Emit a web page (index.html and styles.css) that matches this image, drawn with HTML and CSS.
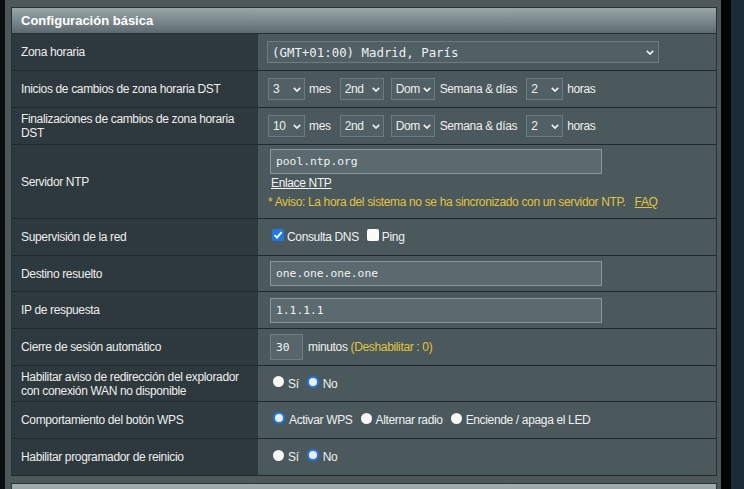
FILE: index.html
```html
<!DOCTYPE html>
<html lang="es">
<head>
<meta charset="utf-8">
<title>Configuración básica</title>
<link rel="stylesheet" href="styles.css">
</head>
<body>
<div class="page">
  <div class="edge-left"></div>
  <main class="panel">
    <section class="form-table">
      <div class="table-head">Configuración básica</div>

      <div class="row">
        <div class="label">Zona horaria</div>
        <div class="value">
          <span class="sel sel-wide">
            <select class="mono"><option>(GMT+01:00) Madrid, París</option></select>
            <svg class="chev" viewBox="0 0 10 6"><path d="M1 1 L5 5 L9 1"/></svg>
          </span>
        </div>
      </div>

      <div class="row">
        <div class="label">Inicios de cambios de zona horaria DST</div>
        <div class="value">
          <span class="sel sel-s"><select><option>3</option></select><svg class="chev" viewBox="0 0 10 6"><path d="M1 1 L5 5 L9 1"/></svg></span>
          <span class="unit">mes</span>
          <span class="sel sel-m sel-gap"><select><option>2nd</option></select><svg class="chev" viewBox="0 0 10 6"><path d="M1 1 L5 5 L9 1"/></svg></span>
          <span class="sel sel-m"><select><option>Dom</option></select><svg class="chev" viewBox="0 0 10 6"><path d="M1 1 L5 5 L9 1"/></svg></span>
          <span class="unit unit-wide">Semana &amp; días</span>
          <span class="sel sel-s"><select><option>2</option></select><svg class="chev" viewBox="0 0 10 6"><path d="M1 1 L5 5 L9 1"/></svg></span>
          <span>horas</span>
        </div>
      </div>

      <div class="row">
        <div class="label">Finalizaciones de cambios de zona horaria DST</div>
        <div class="value">
          <span class="sel sel-s"><select><option>10</option></select><svg class="chev" viewBox="0 0 10 6"><path d="M1 1 L5 5 L9 1"/></svg></span>
          <span class="unit">mes</span>
          <span class="sel sel-m sel-gap"><select><option>2nd</option></select><svg class="chev" viewBox="0 0 10 6"><path d="M1 1 L5 5 L9 1"/></svg></span>
          <span class="sel sel-m"><select><option>Dom</option></select><svg class="chev" viewBox="0 0 10 6"><path d="M1 1 L5 5 L9 1"/></svg></span>
          <span class="unit unit-wide">Semana &amp; días</span>
          <span class="sel sel-s"><select><option>2</option></select><svg class="chev" viewBox="0 0 10 6"><path d="M1 1 L5 5 L9 1"/></svg></span>
          <span>horas</span>
        </div>
      </div>

      <div class="row row-ntp">
        <div class="label">Servidor NTP</div>
        <div class="value value-stack">
          <input class="txt" type="text" value="pool.ntp.org">
          <a class="link" href="#">Enlace NTP</a>
          <div class="hint">* Aviso: La hora del sistema no se ha sincronizado con un servidor NTP. <a class="hint-link" href="#">FAQ</a></div>
        </div>
      </div>

      <div class="row">
        <div class="label">Supervisión de la red</div>
        <div class="value choices">
          <span class="check is-on"><svg viewBox="0 0 12 12"><path d="M2.6 6.2 L5 8.6 L9.6 3.2"/></svg></span>
          <span class="opt">Consulta DNS</span>
          <span class="check"></span>
          <span class="opt">Ping</span>
        </div>
      </div>

      <div class="row row-s">
        <div class="label">Destino resuelto</div>
        <div class="value"><input class="txt" type="text" value="one.one.one.one"></div>
      </div>

      <div class="row">
        <div class="label">IP de respuesta</div>
        <div class="value"><input class="txt" type="text" value="1.1.1.1"></div>
      </div>

      <div class="row">
        <div class="label">Cierre de sesión automático</div>
        <div class="value">
          <input class="txt txt-num" type="text" value="30">
          <span class="after-num">minutos <span class="note">(Deshabilitar : 0)</span></span>
        </div>
      </div>

      <div class="row row-s">
        <div class="label">Habilitar aviso de redirección del explorador con conexión WAN no disponible</div>
        <div class="value choices">
          <span class="radio"></span><span class="opt">Sí</span>
          <span class="radio is-on"></span><span class="opt">No</span>
        </div>
      </div>

      <div class="row">
        <div class="label">Comportamiento del botón WPS</div>
        <div class="value choices">
          <span class="radio is-on"></span><span class="opt">Activar WPS</span>
          <span class="radio"></span><span class="opt">Alternar radio</span>
          <span class="radio"></span><span class="opt">Enciende / apaga el LED</span>
        </div>
      </div>

      <div class="row">
        <div class="label">Habilitar programador de reinicio</div>
        <div class="value choices">
          <span class="radio"></span><span class="opt">Sí</span>
          <span class="radio is-on"></span><span class="opt">No</span>
        </div>
      </div>
    </section>
    <div class="next-table"></div>
  </main>
  <div class="edge-right"></div>
  <div class="side"></div>
</div>
</body>
</html>
```
FILE: styles.css
```css
* { box-sizing: border-box; }

html, body {
  margin: 0;
  padding: 0;
}

body {
  width: 744px;
  height: 489px;
  overflow: hidden;
  background: #000;
  font-family: "Liberation Sans", Arial, sans-serif;
  font-size: 12px;
  letter-spacing: -0.35px;
  color: #eef0f0;
}

.page {
  display: flex;
  height: 489px;
}

.edge-left {
  flex: none;
  width: 5px;
  background: #0b0e10;
}

.panel {
  flex: none;
  width: 716px;
  background: #4e585b;
  padding: 7px 4px 0 6px;
}

.edge-right {
  flex: none;
  width: 10px;
  background: #030405;
}

.side {
  flex: 1;
  background: #1b2b38;
}

.form-table {
  border: 1px solid #283134;
  border-bottom: none;
}

.table-head {
  height: 26px;
  display: flex;
  align-items: center;
  padding-left: 9px;
  background: linear-gradient(#9aa7a9, #7f8c8f 45%, #5e6b6e);
  border-bottom: 1px solid #263033;
  color: #fff;
  font-weight: bold;
  font-size: 13px;
  letter-spacing: 0;
}

.row {
  display: grid;
  grid-template-columns: 246px 1fr;
  height: 37px;
  border-bottom: 1px solid #1f282b;
}

.row-s { height: 36px; }
.row-ntp { height: 74px; }

.label {
  display: flex;
  align-items: center;
  padding: 0 10px 0 9px;
  background: #2e393d;
  line-height: 14px;
  color: #eceeee;
}

.value {
  display: flex;
  align-items: center;
  gap: 4px;
  padding-left: 10px;
  background: #4b595d;
  white-space: nowrap;
}

.value-stack {
  flex-direction: column;
  align-items: flex-start;
  gap: 0;
  padding-top: 4px;
}

.choices { gap: 0; }

/* selects */
.sel {
  position: relative;
  display: inline-flex;
}

.sel select {
  appearance: none;
  -webkit-appearance: none;
  width: 100%;
  height: 22px;
  margin: 0;
  padding: 0 0 0 4px;
  background: #516064;
  border: 1px solid #6c7b7f;
  border-radius: 0;
  color: #eef0f0;
  font-family: "Liberation Sans", Arial, sans-serif;
  font-size: 12px;
  letter-spacing: -0.4px;
}

.sel select.mono {
  font-family: "DejaVu Sans Mono", monospace;
  font-size: 12.4px;
  letter-spacing: 0;
}

.sel-wide { width: 392px; margin-left: -1px; }
.sel-s { width: 37px; }
.sel-m { width: 44px; }
.sel-gap { margin-right: 3px; }

.chev {
  position: absolute;
  right: 4px;
  top: 9px;
  width: 8px;
  height: 5px;
  fill: none;
  stroke: #eef2f3;
  stroke-width: 2;
  pointer-events: none;
}

.sel-wide .chev { right: 5px; }

.unit { margin-right: 5px; }
.unit-wide { margin-left: 1px; }

/* inputs */
.txt {
  width: 332px;
  height: 25px;
  margin: 0 0 0 2px;
  padding: 0 0 0 5px;
  background: #5a6a6e;
  border: 1px solid #879699;
  border-radius: 0;
  color: #f0f2f2;
  font-family: "DejaVu Sans Mono", monospace;
  font-size: 11.3px;
  letter-spacing: 0;
  outline: none;
}

.txt-num {
  width: 33px;
  height: 26px;
  padding-left: 5px;
  border-color: #6f7e82;
  background: #56666a;
}

.after-num { margin-left: 1px; }

.link {
  margin: 2px 0 0 3px;
  line-height: 15px;
  color: #f2f2f2;
  text-decoration: underline;
}

.hint {
  margin-top: 4px;
  line-height: 15px;
  color: #e1c43c;
}

.hint-link {
  margin-left: 6px;
  color: #e1c43c;
  text-decoration: underline;
}

.note { color: #e1c43c; }

/* checkboxes and radios */
.check {
  flex: none;
  width: 12px;
  height: 12px;
  margin: 0 3px 5px 4px;
  border-radius: 2px;
  background: #fbfbfb;
}

.check.is-on {
  background: #1f78e8;
}

.check svg {
  display: block;
  width: 12px;
  height: 12px;
  fill: none;
  stroke: #fff;
  stroke-width: 1.9;
}

.check + .opt { margin-right: 4px; }

.radio {
  flex: none;
  width: 11px;
  height: 11px;
  margin: 0 4px 4px 5px;
  border-radius: 50%;
  background: #f7f7f7;
}

.radio.is-on {
  width: 12px;
  height: 12px;
  border: 2px solid #1f78e8;
  background: #e9eef1;
}

.radio + .opt { margin-right: 3px; }

.next-table {
  margin-top: 7px;
  height: 20px;
  border: 1px solid #2a3336;
  background: linear-gradient(#a2adaf, #8a9799);
}
```
